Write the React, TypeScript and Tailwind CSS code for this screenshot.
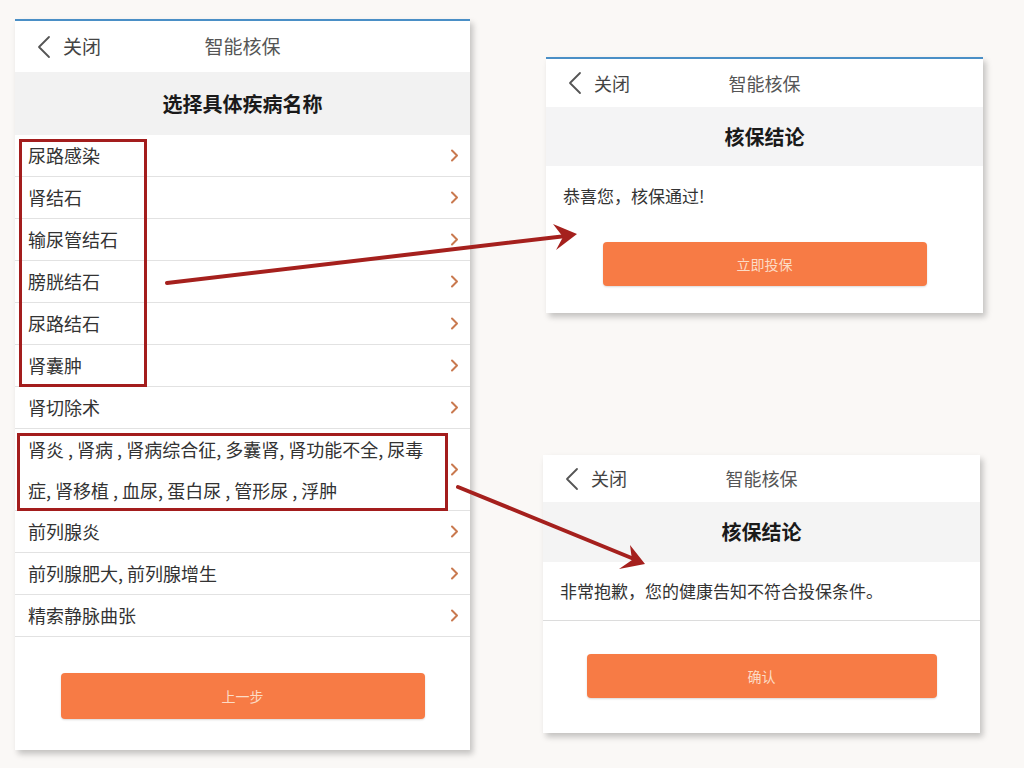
const cjk = "font-[family-name:'Noto_Sans_CJK_SC','Noto_Sans',sans-serif]";

const Chevron = () => (
  <svg width="9" height="13" viewBox="0 0 9 13" className="shrink-0">
    <polyline points="2,1.5 7,6.5 2,11.5" fill="none" stroke="#c9794f" strokeWidth="2" strokeLinecap="round" strokeLinejoin="round" />
  </svg>
);

const BackArrow = () => (
  <svg width="14" height="24" viewBox="0 0 14 24" className="shrink-0">
    <polyline points="12,2 2,12 12,22" fill="none" stroke="#555" strokeWidth="1.8" strokeLinecap="round" strokeLinejoin="round" />
  </svg>
);

const NavBar = ({ h, size }: { h: string; size: string }) => (
  <div className={`relative flex items-center bg-white ${h}`}>
    <div className="flex items-center gap-[12px] pl-[22px]">
      <BackArrow />
      <span className={`${size} text-[#444]`}>关闭</span>
    </div>
    <div className={`absolute inset-0 flex items-center justify-center ${size} text-[#555] pointer-events-none`}>
      智能核保
    </div>
  </div>
);

const diseases = ["尿路感染", "肾结石", "输尿管结石", "膀胱结石", "尿路结石", "肾囊肿", "肾切除术"];
const diseasesAfter = ["前列腺炎", "前列腺肥大, 前列腺增生", "精索静脉曲张"];

const Row = ({ label }: { label: string }) => (
  <div className="flex h-[42px] items-center justify-between border-b border-[#e2e2e2] pl-[13px] pr-[11px]">
    <span className="text-[18px] text-[#333]">{label}</span>
    <Chevron />
  </div>
);

const OrangeButton = ({ label, w, h }: { label: string; w: string; h: string }) => (
  <div className={`mx-auto flex items-center justify-center rounded-[4px] bg-[#f77b45] ${w} ${h} shadow-[0_1px_2px_rgba(0,0,0,0.15)]`}>
    <span className="text-[14px] text-[#fcdcc6]">{label}</span>
  </div>
);

export default function App() {
  return (
    <div className={`relative h-[768px] w-[1024px] overflow-hidden bg-[#faf8f6] ${cjk}`}>
      {/* left screen */}
      <div className="absolute left-[15px] top-[19px] flex h-[731px] w-[455px] flex-col border-t-2 border-[#4a8fc6] bg-white shadow-[3px_4px_6px_rgba(0,0,0,0.22)]">
        <NavBar h="h-[51px]" size="text-[19px]" />
        <div className="flex h-[63px] items-center justify-center bg-[#f2f2f2]">
          <span className="text-[20px] font-bold text-[#1a1a1a]">选择具体疾病名称</span>
        </div>
        {diseases.map((d) => (
          <Row key={d} label={d} />
        ))}
        <div className="flex h-[82px] items-center justify-between border-b border-[#e2e2e2] pl-[13px] pr-[11px]">
          <span className="whitespace-nowrap text-[18px] leading-[41px] text-[#333]">
            肾炎 , 肾病 , 肾病综合征, 多囊肾, 肾功能不全, 尿毒
            <br />
            症, 肾移植 , 血尿, 蛋白尿 , 管形尿 , 浮肿
          </span>
          <Chevron />
        </div>
        {diseasesAfter.map((d) => (
          <Row key={d} label={d} />
        ))}
        <div className="pt-[36px]">
          <OrangeButton label="上一步" w="w-[364px]" h="h-[46px]" />
        </div>
      </div>

      {/* top right screen */}
      <div className="absolute left-[546px] top-[57px] flex h-[256px] w-[437px] flex-col border-t-2 border-[#4a8fc6] bg-white shadow-[3px_4px_6px_rgba(0,0,0,0.22)]">
        <NavBar h="h-[48px]" size="text-[18px]" />
        <div className="flex h-[59px] items-center justify-center bg-[#f4f4f5]">
          <span className="text-[20px] font-bold text-[#1a1a1a]">核保结论</span>
        </div>
        <div className="flex h-[60px] items-center pl-[17px]">
          <span className="text-[17px] text-[#333]">恭喜您，核保通过!</span>
        </div>
        <div className="pt-[16px]">
          <OrangeButton label="立即投保" w="w-[324px]" h="h-[44px]" />
        </div>
      </div>

      {/* bottom right screen */}
      <div className="absolute left-[543px] top-[455px] flex h-[278px] w-[437px] flex-col bg-white shadow-[3px_4px_6px_rgba(0,0,0,0.22)]">
        <NavBar h="h-[47px]" size="text-[18px]" />
        <div className="flex h-[60px] items-center justify-center bg-[#f4f4f4]">
          <span className="text-[20px] font-bold text-[#1a1a1a]">核保结论</span>
        </div>
        <div className="flex h-[59px] items-center border-b border-[#dcdcdc] pl-[17px]">
          <span className="text-[17px] text-[#333]">非常抱歉，您的健康告知不符合投保条件。</span>
        </div>
        <div className="pt-[33px]">
          <OrangeButton label="确认" w="w-[350px]" h="h-[44px]" />
        </div>
      </div>

      {/* annotation boxes */}
      <div className="absolute left-[19px] top-[139px] h-[248px] w-[128px] border-[3px] border-[#a31d1d]" />
      <div className="absolute left-[17px] top-[433px] h-[78px] w-[431px] border-[3px] border-[#a31d1d]" />

      {/* annotation arrows */}
      <svg className="absolute left-0 top-0" width="1024" height="768" viewBox="0 0 1024 768">
        <line x1="167" y1="283" x2="566" y2="236" stroke="#a5201d" strokeWidth="4" strokeLinecap="round" />
        <polygon points="577,234 553,224 563,237 556,250" fill="#a5201d" />
        <line x1="458" y1="487" x2="634" y2="559" stroke="#a5201d" strokeWidth="4" strokeLinecap="round" />
        <polygon points="645,564 630,545 632,560 619,569" fill="#a5201d" />
      </svg>
    </div>
  );
}
